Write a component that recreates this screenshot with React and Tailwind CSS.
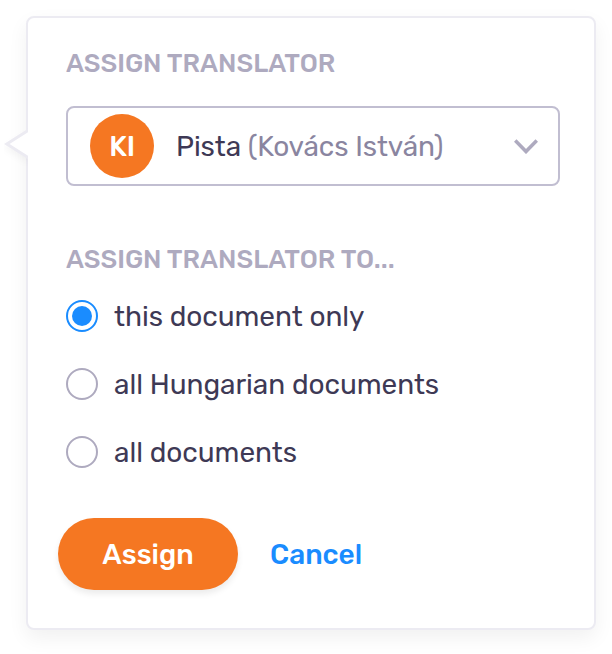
const options = [
  { label: 'this document only', checked: true },
  { label: 'all Hungarian documents', checked: false },
  { label: 'all documents', checked: false },
];

function Radio({ label, checked }) {
  return (
    <label className="flex h-8 items-center gap-4">
      <span
        className={
          checked
            ? 'flex size-8 shrink-0 items-center justify-center rounded-full border-2 border-[#1a8cff]'
            : 'flex size-8 shrink-0 items-center justify-center rounded-full border-2 border-[#aeaabf]'
        }
      >
        {checked && <span className="size-5 rounded-full bg-[#1a8cff]" />}
      </span>
      <span className="whitespace-nowrap pt-0.5 text-[28px] leading-8 tracking-[-0.05px] text-[#3e3955]">{label}</span>
    </label>
  );
}

export default function App() {
  return (
    <div className="h-[654px] w-[612px] overflow-hidden bg-white pl-[26px] pt-4 font-[Rubik,Roboto,sans-serif] antialiased">
      <div className="relative h-[614px] w-[570px] rounded-lg border-2 border-[#ecebf2] bg-white px-[38px] pt-[30px] shadow-[0_8px_20px_rgba(0,0,0,0.06)]">
        <div className="absolute -left-[24px] top-[108px] h-11 w-6 overflow-hidden">
          <svg
            className="drop-shadow-[0_4px_3px_rgba(0,0,0,0.04)]"
            width="24"
            height="36"
            viewBox="0 0 24 36"
            fill="none"
          >
            <path d="M25 3.8 2.8 18 25 32.2Z" fill="white" />
            <path d="M25 3.8 2.8 18 25 32.2" stroke="#ecebf2" strokeWidth="3" />
          </svg>
        </div>
        <h2 className="h-8 whitespace-nowrap text-[26px] font-medium leading-8 text-[#aeaabf]">
          ASSIGN TRANSLATOR
        </h2>
        <button className="mt-[26px] flex h-20 w-[494px] items-center rounded-lg border-2 border-[#c1bed1] pl-[22px] pr-5 text-left">
          <span className="flex size-16 items-center justify-center rounded-full bg-[#f57722] pt-0.5 text-[28px] font-medium tracking-[-0.3px] text-white">
            KI
          </span>
          <span className="ml-[22px] whitespace-nowrap pt-0.5 text-[28px] leading-8 tracking-[-0.08px] text-[#3e3955]">
            Pista <span className="text-[#8a85a0]">(Kovács István)</span>
          </span>
          <svg className="ml-auto" width="24" height="16" viewBox="0 0 24 16" fill="none">
            <path d="m1.2 2.5 10.8 11 10.8-11" stroke="#aeaabf" strokeWidth="3.6" />
          </svg>
        </button>
        <h2 className="mt-[58px] h-8 whitespace-nowrap text-[26px] font-medium leading-8 text-[#aeaabf]">
          ASSIGN TRANSLATOR TO...
        </h2>
        <div className="mt-6 flex flex-col gap-9">
          {options.map((o) => (
            <Radio key={o.label} {...o} />
          ))}
        </div>
        <div className="-ml-2 mt-[50px] flex items-center gap-8">
          <button className="h-[72px] w-[180px] rounded-full bg-[#f57722] pt-0.5 text-[28px] font-medium text-white shadow-[0_4px_6px_rgba(0,0,0,0.08)]">
            Assign
          </button>
          <button className="whitespace-nowrap pt-0.5 text-[28px] font-medium text-[#1a8cff]">Cancel</button>
        </div>
      </div>
    </div>
  );
}
